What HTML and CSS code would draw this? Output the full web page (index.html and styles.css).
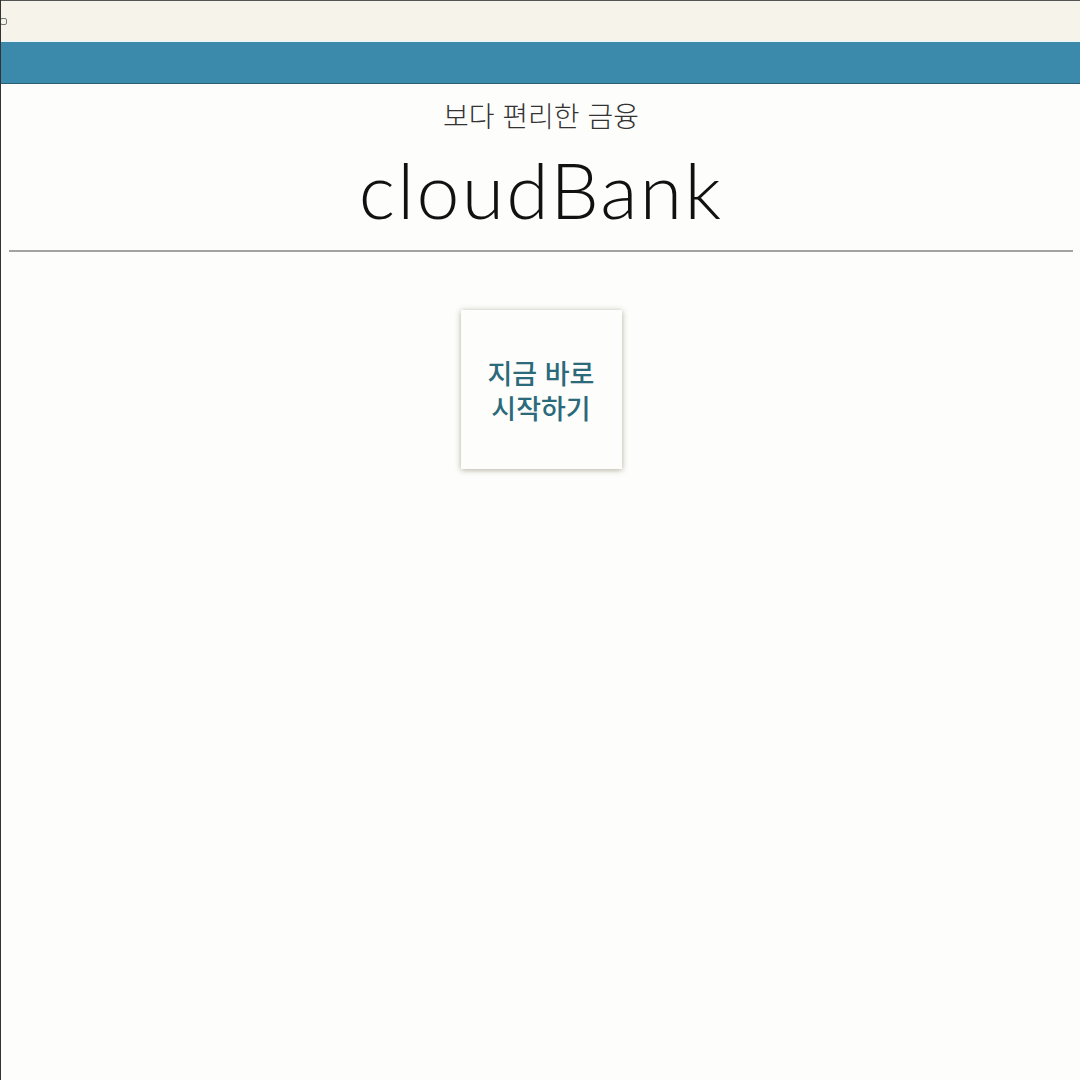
FILE: index.html
```html
<!DOCTYPE html>
<html lang="ko">
<head>
<meta charset="utf-8">
<title>cloudBank</title>
<link rel="stylesheet" href="styles.css">
</head>
<body>
<div class="topstrip"><span class="broken"></span></div>
<div class="navbar"></div>
<main class="main">
  <p class="subtitle">보다 편리한 금융</p>
  <h1 class="brand">cloudBank</h1>
  <hr class="divider">
  <div class="cardwrap">
    <a class="startcard" href="#"><span class="line">지금 바로</span><span class="line">시작하기</span></a>
  </div>
</main>
</body>
</html>
```
FILE: styles.css
```css
html, body {
  margin: 0;
  padding: 0;
  background: #fdfdfb;
  height: 100%;
}
body {
  border-left: 1px solid #333;
  box-sizing: border-box;
  font-family: "Noto Sans CJK KR", "Noto Sans", sans-serif;
}
.topstrip {
  height: 41px;
  background: #f6f4ea;
  border-top: 1px solid #555;
  box-sizing: border-box;
  display: flex;
  align-items: center;
}
.broken {
  display: block;
  width: 5px;
  height: 5px;
  border: 1px solid #777;
  border-radius: 2px;
  margin-left: -1px;
}
.navbar {
  height: 43px;
  background: #3c8aab;
  border-top: 1px solid #e8f6fb;
  border-bottom: 1px solid #2b5d75;
  box-sizing: border-box;
}
.main {
  padding: 0 7px 0 8px;
  display: flex;
  flex-direction: column;
  align-items: center;
}
.subtitle {
  margin: 12px 0 0;
  font-size: 28px;
  line-height: 38px;
  color: #333;
  font-weight: 300;
}
.brand {
  margin: 13px 0 0;
  font-family: "Lato", sans-serif;
  font-weight: 300;
  font-size: 77px;
  line-height: 84px;
  color: #111;
  letter-spacing: 2.2px;
}
.divider {
  align-self: stretch;
  margin: 19px 0 0;
  border: 0;
  height: 2px;
  background: #a3a3a3;
}
.cardwrap {
  margin-top: 58px;
  display: flex;
  justify-content: center;
}
.startcard {
  width: 161px;
  height: 159px;
  box-sizing: border-box;
  display: flex;
  flex-direction: column;
  align-items: center;
  justify-content: center;
  text-align: center;
  background: #fdfdfb;
  box-shadow: 0 1px 6px rgba(60,60,20,0.4);
  color: #2b6a7a;
  text-decoration: none;
  font-size: 27px;
  font-weight: 500;
}
.line {
  display: block;
  line-height: 35px;
}
```
